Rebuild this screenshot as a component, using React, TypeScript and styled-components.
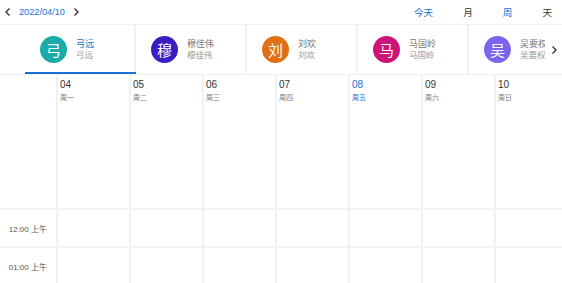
import React from 'react'
import styled, { createGlobalStyle } from 'styled-components'

const GlobalStyle = createGlobalStyle`
  html, body {
    margin: 0;
    padding: 0;
    background: #fff;
  }
  body {
    font-family: "Liberation Sans", "Noto Sans CJK SC", sans-serif;
    color: #333;
  }
`

const BLUE = '#1a6fd6'
const LINE = '#f1f1f1'

const Page = styled.div`
  width: 562px;
  height: 283px;
  overflow: hidden;
  display: flex;
  flex-direction: column;
`

const Toolbar = styled.div`
  height: 24px;
  flex-shrink: 0;
  display: flex;
  align-items: center;
  justify-content: space-between;
  padding-left: 2px;
  border-bottom: 1px solid ${LINE};
`

const DateNav = styled.div`
  display: flex;
  align-items: center;
  gap: 3px;
`

const NavArrow = styled.span`
  display: inline-flex;
  align-items: center;
  padding: 0 2px;
`

const DateText = styled.span`
  font-size: 9.2px;
  color: ${BLUE};
  padding: 0 2px;
`

const ViewSwitch = styled.div`
  display: flex;
  align-items: center;
  padding-right: 10px;
`

const ViewButton = styled.span<{ $active?: boolean }>`
  padding-left: 30px;
  font-size: 9.6px;
  color: ${({ $active }) => ($active ? BLUE : '#333')};
`

const TabsRow = styled.div`
  height: 49px;
  flex-shrink: 0;
  display: flex;
  border-bottom: 1px solid ${LINE};
`

const TabsTrack = styled.div`
  flex: 1;
  display: flex;
  overflow: hidden;
  padding-left: 25px;
`

const Tab = styled.div<{ $active?: boolean }>`
  position: relative;
  width: 111px;
  flex-shrink: 0;
  box-sizing: border-box;
  display: flex;
  align-items: center;
  gap: 9px;
  padding-left: 15px;
  border-right: 2px solid ${LINE};

  &::after {
    content: '';
    display: ${({ $active }) => ($active ? 'block' : 'none')};
    position: absolute;
    left: 0;
    right: -2px;
    bottom: 0;
    height: 2px;
    background: ${BLUE};
  }
`

const Avatar = styled.div<{ $bg: string }>`
  width: 27px;
  height: 27px;
  border-radius: 50%;
  background: ${({ $bg }) => $bg};
  color: #fff;
  font-size: 15px;
  display: flex;
  align-items: center;
  justify-content: center;
  flex-shrink: 0;
`

const TabText = styled.div`
  display: flex;
  flex-direction: column;
  white-space: nowrap;
  overflow: hidden;
  line-height: 11px;
`

const TabName = styled.span<{ $active?: boolean }>`
  font-size: 9px;
  color: ${({ $active }) => ($active ? BLUE : '#777')};
`

const TabSub = styled.span`
  font-size: 8.5px;
  color: #999;
`

const TabArrow = styled.div`
  width: 17px;
  flex-shrink: 0;
  display: flex;
  align-items: center;
  justify-content: center;
  background: #fff;
`

const Grid = styled.div`
  flex: 1;
  display: grid;
  grid-template-columns: 56px repeat(7, 73px);
  grid-template-rows: 133px repeat(2, 38px);
`

const GutterCell = styled.div<{ $top?: boolean }>`
  border-top: ${({ $top }) => ($top ? `2px solid ${LINE}` : 'none')};
  display: flex;
  align-items: center;
  justify-content: flex-end;
  padding-right: 9px;
  font-size: 8px;
  color: #555;
  white-space: nowrap;
`

const DayHead = styled.div`
  border-left: 2px solid ${LINE};
  padding: 4px 0 0 2px;
  display: flex;
  flex-direction: column;
  gap: 2px;
`

const DayNum = styled.span<{ $today?: boolean }>`
  font-size: 10px;
  color: ${({ $today }) => ($today ? BLUE : '#333')};
`

const WeekDay = styled.span<{ $today?: boolean }>`
  font-size: 7px;
  color: ${({ $today }) => ($today ? BLUE : '#777')};
`

const SlotCell = styled.div`
  border-left: 2px solid ${LINE};
  border-top: 2px solid ${LINE};
`

const Chevron = ({ dir }: { dir: 'left' | 'right' }) => (
  <svg width="8" height="10" viewBox="0 0 8 10" fill="none">
    <path
      d={dir === 'left' ? 'M5.5 1.5 L2 5 L5.5 8.5' : 'M2.5 1.5 L6 5 L2.5 8.5'}
      stroke="#333"
      strokeWidth="1.4"
    />
  </svg>
)

const people = [
  { char: '弓', name: '弓远', color: '#1aacab' },
  { char: '穆', name: '穆佳伟', color: '#3b1dc4' },
  { char: '刘', name: '刘欢', color: '#e07014' },
  { char: '马', name: '马国岭', color: '#cc1577' },
  { char: '吴', name: '吴要权', color: '#7b64ef' },
]

const days = [
  { num: '04', wd: '周一' },
  { num: '05', wd: '周二' },
  { num: '06', wd: '周三' },
  { num: '07', wd: '周四' },
  { num: '08', wd: '周五', today: true },
  { num: '09', wd: '周六' },
  { num: '10', wd: '周日' },
]

const slots = ['12:00 上午', '01:00 上午']

export default function App() {
  return (
    <Page>
      <GlobalStyle />
      <Toolbar>
        <DateNav>
          <NavArrow>
            <Chevron dir="left" />
          </NavArrow>
          <DateText>2022/04/10</DateText>
          <NavArrow>
            <Chevron dir="right" />
          </NavArrow>
        </DateNav>
        <ViewSwitch>
          <ViewButton $active>今天</ViewButton>
          <ViewButton>月</ViewButton>
          <ViewButton $active>周</ViewButton>
          <ViewButton>天</ViewButton>
        </ViewSwitch>
      </Toolbar>

      <TabsRow>
        <TabsTrack>
          {people.map((p, i) => (
            <Tab key={p.name} $active={i === 0}>
              <Avatar $bg={p.color}>{p.char}</Avatar>
              <TabText>
                <TabName $active={i === 0}>{p.name}</TabName>
                <TabSub>{p.name}</TabSub>
              </TabText>
            </Tab>
          ))}
        </TabsTrack>
        <TabArrow>
          <Chevron dir="right" />
        </TabArrow>
      </TabsRow>

      <Grid>
        <GutterCell />
        {days.map(d => (
          <DayHead key={d.num}>
            <DayNum $today={d.today}>{d.num}</DayNum>
            <WeekDay $today={d.today}>{d.wd}</WeekDay>
          </DayHead>
        ))}
        {slots.map(s => (
          <React.Fragment key={s}>
            <GutterCell $top>{s}</GutterCell>
            {days.map(d => (
              <SlotCell key={d.num} />
            ))}
          </React.Fragment>
        ))}
      </Grid>
    </Page>
  )
}
